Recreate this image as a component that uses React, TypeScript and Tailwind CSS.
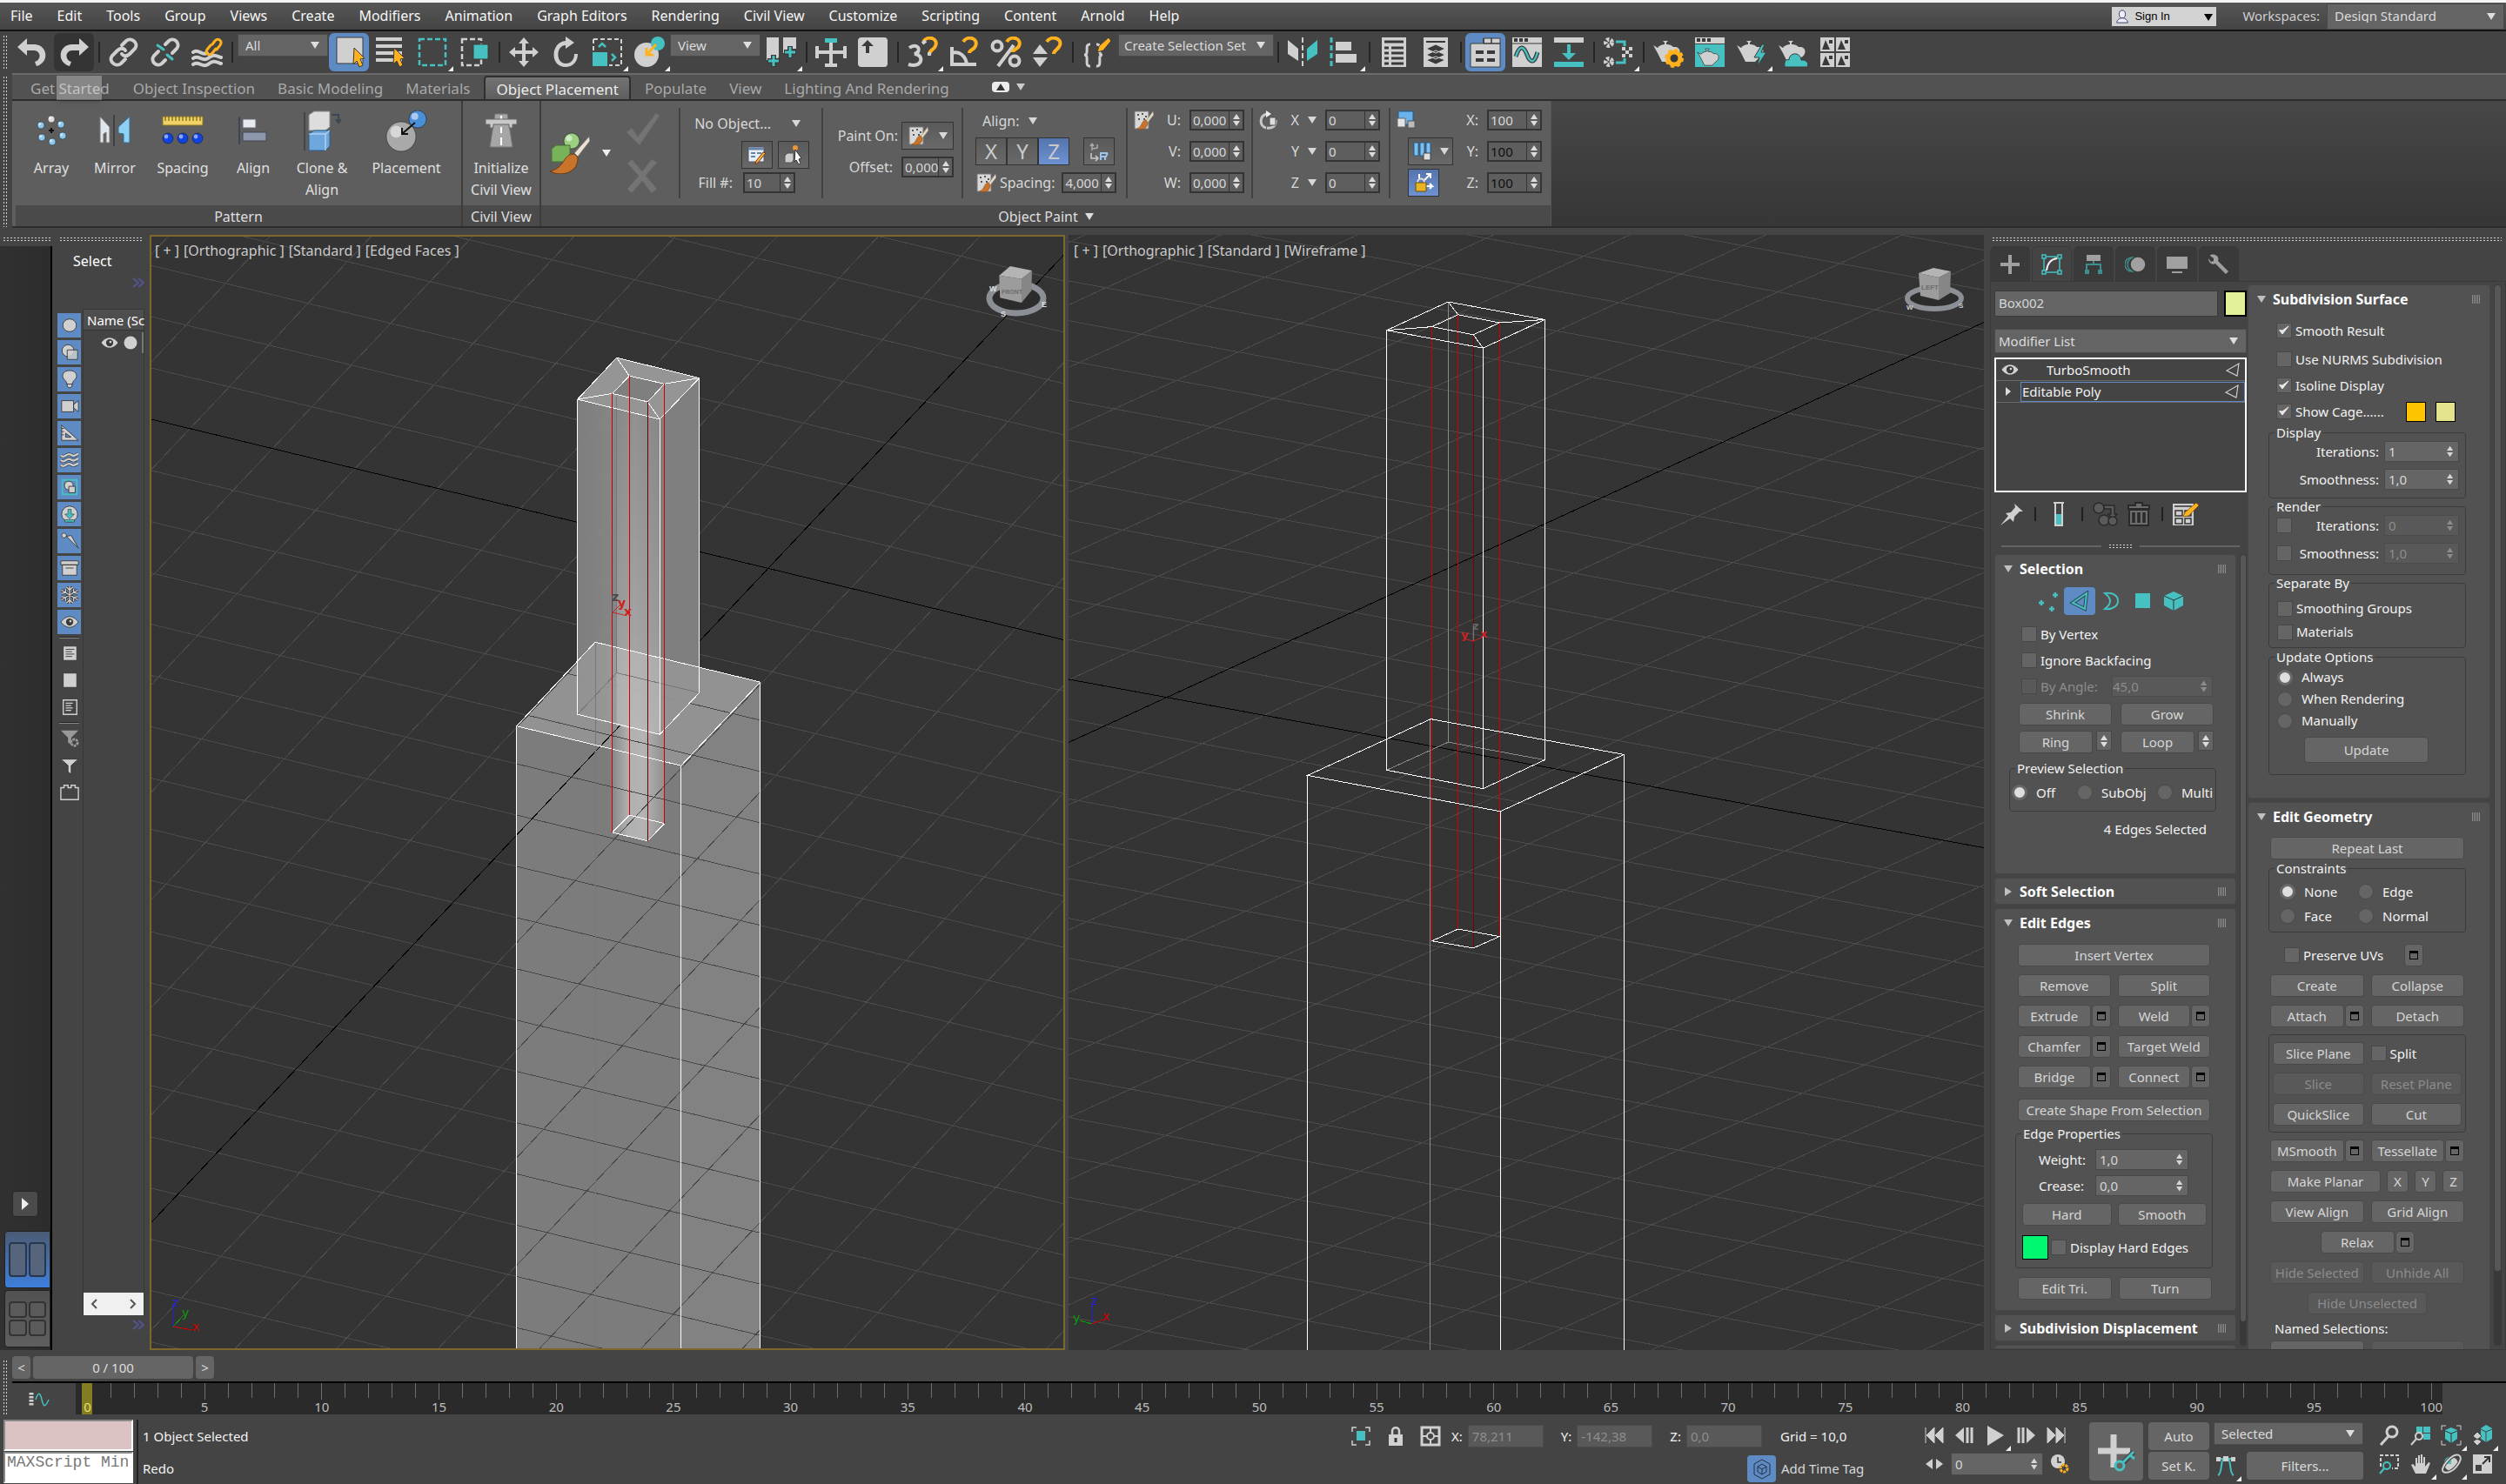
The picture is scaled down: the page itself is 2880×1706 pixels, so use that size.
import React from "react";

type Kids = { children?: React.ReactNode };

const L = "#d0d0d0";
const T = "#46c0c0";
const O = "#ffb21e";
const D = "#3a3a3a";

/* ---------- shared controls ---------- */

function Caret({ className = "" }: { className?: string }) {
  return (
    <svg viewBox="0 0 10 8" className={`h-2 w-2.5 ${className}`} aria-hidden="true">
      <path d="M0 0h10L5 8z" fill="currentColor" />
    </svg>
  );
}

function Combo({ label, value, className = "" }: { label: string; value: string; className?: string }) {
  return (
    <span className={`relative block ${className}`}>
      <select
        aria-label={label}
        className="h-full w-full appearance-none border border-[#4a4a4a] bg-[#646464] pl-2 pr-6 text-[15px] leading-none text-[#dcdcdc]"
      >
        <option>{value}</option>
      </select>
      <Caret className="pointer-events-none absolute right-2.5 top-1/2 -mt-1 text-[#dedede]" />
    </span>
  );
}

function Btn({ children, off, label, className = "" }: Kids & { off?: boolean; label?: string; className?: string }) {
  return (
    <button
      type="button"
      disabled={off}
      aria-label={label}
      className={`flex h-[26px] items-center justify-center whitespace-nowrap rounded border ${
        off ? "border-[#4c4c4c] bg-[#595959] text-[#8c8c8c]" : "border-[#494949] bg-[#656565] text-[#d6d6d6]"
      } ${className}`}
    >
      {children}
    </button>
  );
}

function Settings({ label }: { label: string }) {
  return (
    <button
      type="button"
      aria-label={`${label} settings`}
      className="flex h-[26px] w-[22px] shrink-0 items-center justify-center rounded border border-[#494949] bg-[#656565]"
    >
      <span className="block h-[10px] w-[10px] border border-t-[3px] border-black" />
    </button>
  );
}

function WithSettings({ children, name }: Kids & { name: string }) {
  return (
    <div className="flex gap-px">
      <Btn className="flex-1">{children}</Btn>
      <Settings label={name} />
    </div>
  );
}

function Arrows({ className = "" }: { className?: string }) {
  return (
    <svg viewBox="0 0 8 14" className={`h-3.5 w-2 ${className}`} aria-hidden="true">
      <path d="M0 6h8L4 0zM0 8h8l-4 6z" fill="currentColor" />
    </svg>
  );
}

function Spin({ label, value, off, className = "" }: { label: string; value: string; off?: boolean; className?: string }) {
  return (
    <span
      className={`flex h-6 items-center border pr-1.5 ${
        off ? "border-[#4c4c4c] bg-[#595959] text-[#8c8c8c]" : "border-[#484848] bg-[#656565] text-[#d6d6d6]"
      } ${className}`}
    >
      <input aria-label={label} defaultValue={value} disabled={off} className="w-full min-w-0 bg-transparent pl-1 leading-none" />
      <Arrows />
    </span>
  );
}

function Check({ label, on, off, className = "" }: { label: string; on?: boolean; off?: boolean; className?: string }) {
  return (
    <label className={`flex items-center gap-1 whitespace-nowrap ${off ? "text-[#8c8c8c]" : "text-[#f2f2f2]"} ${className}`}>
      <span className="relative block h-[18px] w-[18px] shrink-0">
        <input
          type="checkbox"
          defaultChecked={on}
          disabled={off}
          className="peer block h-full w-full appearance-none border border-[#484848] bg-[#656565] disabled:bg-[#595959]"
        />
        <svg viewBox="0 0 18 18" className="pointer-events-none absolute inset-0 hidden h-full w-full peer-checked:block">
          <path d="M3.500 8.500L7 13l7-9-7 5z" fill="#e8e8e8" stroke="#e8e8e8" />
        </svg>
      </span>
      {label}
    </label>
  );
}

function Radio({ label, name, on, className = "" }: { label: string; name: string; on?: boolean; className?: string }) {
  return (
    <label className={`flex items-center gap-2.5 whitespace-nowrap text-[#f2f2f2] ${className}`}>
      <input
        type="radio"
        name={name}
        defaultChecked={on}
        className="block h-[18px] w-[18px] shrink-0 appearance-none rounded-full border border-[#4b4b4b] bg-[#656565] checked:border-[3px] checked:border-[#686868] checked:bg-[#dedede]"
      />
      {label}
    </label>
  );
}

function Group({ title, children, className = "" }: Kids & { title: string; className?: string }) {
  return (
    <fieldset className={`rounded-sm border border-[#3b3b3b] ${className}`}>
      <legend className="ml-1.5 h-5 px-0.5 leading-5 text-[#f2f2f2]">{title}</legend>
      {children}
    </fieldset>
  );
}

function Rollout({ title, open, children, className = "" }: Kids & { title: string; open?: boolean; className?: string }) {
  return (
    <section className={`shrink-0 rounded border border-[#474747] bg-[#525252] ${className}`}>
      <header className={`flex items-center px-2.5 ${open ? "h-[31px]" : "h-[29px]"}`}>
        <svg viewBox="0 0 10 10" className="mr-2 h-2.5 w-2.5" aria-hidden="true">
          <path d={open ? "M0 1h10L5 9z" : "M1 0v10l8-5z"} fill="#c0c0c0" />
        </svg>
        <h2 className="flex-1 text-[16px] font-bold leading-5 text-white">{title}</h2>
        <span className="h-2.5 w-2.5 bg-[repeating-linear-gradient(90deg,#8c8c8c_0_1px,#525252_1px_2px)]" />
      </header>
      {children}
    </section>
  );
}

function Grip({ vertical, className = "" }: { vertical?: boolean; className?: string }) {
  return (
    <span
      className={`block shrink-0 ${
        vertical
          ? "bg-[radial-gradient(#d2d2d2_1px,transparent_1px)] bg-[size:3px_4px]"
          : "bg-[radial-gradient(#d2d2d2_1px,transparent_1px)] bg-[size:4px_3px]"
      } ${className}`}
    />
  );
}

/* ---------- toolbar drawings (36 x 36 box) ---------- */

const teapot = "M1 10l5 3c2-3 6-4 8-4V7l-2-2h6l-2 2v2c4 0 6 1 8 3l3 0c6 1 6 9 0 12l-5 5H11L6 19 1 10z";

const tools: Record<string, React.ReactNode> = {
  undo: <path d="M12 2L1 12l11 10v-6h8c8 0 9 11 1 13l2 5c15-4 13-24-2-25h-9z" fill={L} />,
  redo: <path d="M24 2l11 10-11 10v-6h-8c-8 0-9 11-1 13l-2 5C-2 30 0 10 15 9h9z" fill={L} />,
  link: (
    <g fill="none" stroke={L} strokeWidth="4" strokeLinecap="round">
      <path d="M16 10l5-5c6-5 15 3 10 9l-6 6c-3 3-7 3-9 0" />
      <path d="M20 26l-5 5C9 36 0 28 5 22l6-6c3-3 7-3 9 0" />
    </g>
  ),
  unlink: (
    <g fill="none" strokeWidth="4" strokeLinecap="round">
      <path d="M18 9l4-4c6-5 14 3 9 9l-5 5M18 27l-4 4C8 36 0 28 5 22l5-5" stroke={L} />
      <path d="M9 10l7 5M20 21l6 5" stroke={T} strokeWidth="3" />
    </g>
  ),
  bind: (
    <g fill="none" strokeLinecap="round">
      <path d="M2 18c6-5 10 5 16 1M2 25c6-5 11 5 17 0s9-3 15-1M2 32c6-5 11 5 17 0s9-3 15-1" stroke={L} strokeWidth="4" />
      <path d="M24 9l3-4c4-4 9 0 6 5l-4 5M28 14l-4 5c-4 4-9 0-6-4l4-5" stroke={O} strokeWidth="3" />
    </g>
  ),
  select: (
    <g>
      <path d="M4 1h30v30H4z" fill={L} stroke={D} />
      <path d="M24 13l12 12-5 1 3 7-4 2-3-7-4 4z" fill={O} stroke={D} />
    </g>
  ),
  byName: (
    <g>
      <path d="M1 1h30v4H1zM1 9h30v4H1zM1 17h30v4H1zM1 25h30v4H1z" fill={L} />
      <path d="M22 13l12 12-5 1 3 7-4 2-3-7-4 4z" fill={O} stroke={D} />
    </g>
  ),
  region: <path d="M3 3h30v30H3z" fill="none" stroke={T} strokeWidth="2.500" strokeDasharray="6 3" />,
  crossing: (
    <g>
      <path d="M4 3h22v30H4z" fill="none" stroke={L} strokeWidth="2.500" strokeDasharray="6 3" />
      <path d="M17 9h17v17H17z" fill={T} stroke={D} />
    </g>
  ),
  move: <path d="M18 1l6 7h-4v8h8v-4l7 6-7 6v-4h-8v8h4l-6 7-6-7h4v-8H8v4l-7-6 7-6v4h8V8h-4z" fill={L} />,
  rotate: <path d="M18 0l10 7-10 7v-4C7 10 6 31 18 31c7 0 10-5 10-11h4c0 9-6 15-14 15C-1 35 1 6 18 5z" fill={L} />,
  scale: (
    <g>
      <path d="M2 3h32v30H20M2 3v14" fill="none" stroke={L} strokeWidth="2" strokeDasharray="5 3" />
      <path d="M1 18h17v16H1z" fill={T} />
      <path d="M8 12l4-4 4 4M23 20l4 4-4 4" fill="none" stroke={T} strokeWidth="2.500" />
    </g>
  ),
  place: (
    <g>
      <ellipse cx="15" cy="21" rx="14" ry="14" fill={L} />
      <circle cx="28" cy="8" r="8" fill={T} />
      <path d="M26 9L17 19M15 13v8h8" fill="none" stroke={O} strokeWidth="3" />
    </g>
  ),
  pivot: (
    <g>
      <path d="M1 1h14v22l-3 8-5-3-6-1zM20 1h15v13H25v5h-5z" fill={L} />
      <path d="M9 21v14M2 28h14M28 11v14M21 18h14" stroke={D} strokeWidth="6" />
      <path d="M9 22v12M3 28h12M28 12v12M22 18h12" stroke={T} strokeWidth="3" />
    </g>
  ),
  manipulate: (
    <g>
      <path d="M18 4v28M2 18h32" stroke={L} strokeWidth="4" />
      <path d="M2 11v14M34 11v14M11 33h14" stroke={L} strokeWidth="4" />
      <path d="M11 2h14v5H11z" fill={T} />
    </g>
  ),
  keyboard: (
    <g>
      <rect x="1" y="1" width="34" height="34" rx="4" fill={L} />
      <path d="M12 4l7 7h-5v8h-4v-8H5z" fill={D} />
    </g>
  ),
  snap: (
    <g fill="none">
      <path d="M3 13c9-7 16 4 6 7 12 1 9 17-7 12" stroke={L} strokeWidth="4" />
      <path d="M19 6c5-8 18-4 14 5-2 5-7 4-7 10" stroke={O} strokeWidth="4" />
      <path d="M26 18v4M18 8l4-3" stroke={L} strokeWidth="4" />
    </g>
  ),
  angle: (
    <g fill="none">
      <path d="M4 12v20h28M4 19c9-3 16 4 17 13" stroke={L} strokeWidth="4" />
      <path d="M17 6c5-8 18-4 14 5-2 5-7 4-7 8" stroke={O} strokeWidth="4" />
    </g>
  ),
  percent: (
    <g fill="none">
      <circle cx="8" cy="11" r="5.500" stroke={L} strokeWidth="4" />
      <circle cx="28" cy="28" r="5.500" stroke={L} strokeWidth="4" />
      <path d="M27 10L9 34" stroke={L} strokeWidth="4" />
      <path d="M19 6c5-8 18-4 14 5-2 4-7 4-7 7" stroke={O} strokeWidth="4" />
    </g>
  ),
  spinner: (
    <g fill="none">
      <path d="M1 20l8-11 9 11zM1 24h17L9 35z" fill={L} />
      <path d="M17 6c5-8 18-4 15 4-2 6-7 5-7 10" stroke={O} strokeWidth="4" />
    </g>
  ),
  braces: (
    <g fill="none">
      <path d="M10 9c-8-1 0 12-7 12 7 0-1 14 7 13M17 9c8-1 0 12 7 12-7 0 1 14-7 13" stroke={L} strokeWidth="3" />
      <path d="M18 18l2-7L31 1l3 4-9 11z" fill={O} stroke={D} />
    </g>
  ),
  mirror: (
    <g>
      <path d="M1 4l12 10v14L1 20z" fill={L} />
      <path d="M35 4L23 14v14l12-8z" fill={T} />
      <path d="M18 1v34" stroke={L} strokeWidth="2" strokeDasharray="6 3" />
    </g>
  ),
  align: (
    <g>
      <path d="M3 1v34" stroke={T} strokeWidth="3" strokeDasharray="6 3" />
      <path d="M8 6h18v10H8zM8 20h24v10H8z" fill={L} />
    </g>
  ),
  layer: (
    <g>
      <path d="M4 1h28v34H4z" fill={L} />
      <path d="M7 6h22M7 13h5M15 13h14M7 19h5M15 19h14M7 25h5M15 25h14M7 31h5M15 31h14" stroke={D} strokeWidth="3" />
    </g>
  ),
  layers: (
    <g>
      <path d="M4 1h28v34H4z" fill={L} />
      <path d="M7 6h22" stroke={D} strokeWidth="2" />
      <path d="M18 9l11 5-11 5-11-5zM18 16l11 5-11 5-11-5zM18 23l11 4-11 5-11-5z" fill={D} stroke={L} />
    </g>
  ),
  ribbon: (
    <g>
      <path d="M1 8h15V2h19v33H1z" fill={L} stroke={D} />
      <path d="M16 2v6M25 2v6M16 8h19" stroke={D} strokeWidth="1.500" />
      <path d="M7 18h9M20 18h9M7 27h9M20 27h9" stroke={D} strokeWidth="4" />
    </g>
  ),
  curve: (
    <g>
      <path d="M1 1h34v34H1z" fill={L} />
      <path d="M3 4h4M9 4h4M15 4h4" stroke={D} strokeWidth="4" />
      <path d="M1 8h34" stroke={D} />
      <path d="M5 23c5-16 10-10 13-2s8 12 12-3" fill="none" stroke={D} strokeWidth="5" />
      <path d="M5 23c5-16 10-10 13-2s8 12 12-3" fill="none" stroke={T} strokeWidth="2.500" />
    </g>
  ),
  schematic: (
    <g>
      <path d="M1 1h34v6H1z" fill={L} />
      <path d="M16 9h4v10h6l-8 8-8-8h6zM1 29h34v6H1z" fill={T} />
    </g>
  ),
  slate: (
    <g fill="none">
      <circle cx="7" cy="7" r="3.500" stroke={L} strokeWidth="5" strokeDasharray="3 1.500" />
      <circle cx="7" cy="29" r="3.500" stroke={L} strokeWidth="5" strokeDasharray="3 1.500" />
      <path d="M15 6h10v5M15 30h10v-5" stroke={T} strokeWidth="3" />
      <path d="M22 12h4v4h-4zM30 12h4v4h-4zM26 16h4v4h-4zM22 20h4v4h-4zM30 20h4v4h-4z" fill={L} />
    </g>
  ),
  renderSetup: (
    <g>
      <path d={teapot} fill={L} />
      <circle cx="25" cy="25" r="7" fill={D} stroke={O} strokeWidth="5" />
      <circle cx="25" cy="25" r="9.500" fill="none" stroke={O} strokeWidth="3" strokeDasharray="4 3.500" />
    </g>
  ),
  frame: (
    <g>
      <path d="M1 1h34v7H1z" fill={L} />
      <path d="M3 4h4M9 4h4M15 4h4" stroke={D} strokeWidth="4" />
      <path d="M1 9h34v26H1z" fill={T} />
      <path d={teapot} fill={L} stroke={D} transform="translate(3 10) scale(.8)" />
    </g>
  ),
  render: (
    <g>
      <path d={teapot} fill={L} />
      <path d="M30 9l-9 15h6l-3 11 11-17h-6l4-9z" fill={T} stroke={D} />
    </g>
  ),
  cloud: (
    <g>
      <path d={teapot} fill={L} />
      <path d="M8 35c-1-9 3-9 5-8 0-9 13-10 14 0 9-1 9 8 6 8z" fill={T} stroke={D} />
    </g>
  ),
  gallery: (
    <g>
      <path d="M1 1h16v16H1zM19 1h16v16H19zM1 19h16v16H1zM19 19h16v16H19z" fill={L} />
      <path d="M3 15l4-11 5 11zM21 15l4-11 5 11zM3 33l4-11 5 11zM21 33l4-11 5 11z" fill={D} />
      <path d="M11 6h4M29 6h4M11 24h4M29 24h4" stroke={D} strokeWidth="4" />
    </g>
  ),
};

function Tool({ name, label, on, hover, fly }: { name: string; label: string; on?: boolean; hover?: boolean; fly?: boolean }) {
  return (
    <button type="button" aria-label={label} className="relative flex h-12 w-12 shrink-0 items-center justify-center">
      <span
        className={`flex h-11 w-[46px] items-center justify-center rounded-md ${
          on ? "border-2 border-[#5f8bc4] bg-[#5f8bc4]" : hover ? "bg-[#343434]" : ""
        }`}
      >
        <svg viewBox="0 0 36 36" className="h-9 w-9">
          {tools[name]}
        </svg>
      </span>
      {fly && (
        <svg viewBox="0 0 6 6" className="absolute bottom-0.5 right-0 h-1.5 w-1.5">
          <path d="M6 0v6H0z" fill="#eee" />
        </svg>
      )}
    </button>
  );
}

function Sep() {
  return (
    <span className="flex w-[9px] shrink-0 justify-center">
      <span className="h-6 w-0.5 bg-[#242424]" />
    </span>
  );
}

const menus = [
  "File", "Edit", "Tools", "Group", "Views", "Create", "Modifiers", "Animation", "Graph Editors",
  "Rendering", "Civil View", "Customize", "Scripting", "Content", "Arnold", "Help",
];

function MenuBar() {
  return (
    <header className="flex h-9 shrink-0 items-center border-b-2 border-t-[3px] border-b-[#141414] border-t-[#f4f4f4] bg-gradient-to-b from-[#565656] to-[#444]">
      <nav className="flex gap-7 pb-px pl-3 text-[16px] text-[#f6f6f6]">
        {menus.map((m) => (
          <a key={m} href="#" className="whitespace-nowrap">
            {m}
          </a>
        ))}
      </nav>
      <div className="ml-auto flex items-center">
        <span className="relative mr-[30px] flex h-[22px] w-[120px] items-center bg-[#d2d2d2]">
          <svg viewBox="0 0 16 18" className="ml-1 h-4 w-4">
            <ellipse cx="8" cy="6" rx="4" ry="5" fill="#eef" stroke="#26345a" />
            <path d="M1 17c0-4 4-6 7-6s7 2 7 6z" fill="#eef" stroke="#26345a" />
          </svg>
          <select aria-label="Account" className="h-full flex-1 appearance-none bg-transparent pl-1.5 font-['Liberation_Sans'] text-[13px] text-black">
            <option>Sign In</option>
          </select>
          <Caret className="absolute right-1 top-2 text-black" />
        </span>
        <span className="mr-2 text-[15px] text-[#cfcfcf]">Workspaces:</span>
        <Combo label="Workspaces" value="Design Standard" className="mr-0.5 h-[30px] w-[204px]" />
      </div>
    </header>
  );
}

function Toolbar() {
  return (
    <div className="relative flex h-12 shrink-0 items-center bg-[#444]">
      <Grip vertical className="ml-[3px] mr-1 h-10 w-1.5" />
      <Tool name="undo" label="Undo" />
      <Tool name="redo" label="Redo" hover />
      <Sep />
      <Tool name="link" label="Select and Link" />
      <Tool name="unlink" label="Unlink Selection" />
      <Tool name="bind" label="Bind to Space Warp" />
      <Sep />
      <Combo label="Selection filter" value="All" className="mb-4 ml-0.5 h-[26px] w-[104px]" />
      <Tool name="select" label="Select Object" on />
      <Tool name="byName" label="Select by Name" />
      <Tool name="region" label="Rectangular Selection Region" fly />
      <Tool name="crossing" label="Window / Crossing" />
      <Sep />
      <Tool name="move" label="Select and Move" />
      <Tool name="rotate" label="Select and Rotate" />
      <Tool name="scale" label="Select and Scale" fly />
      <Tool name="place" label="Select and Place" fly />
      <Combo label="Reference coordinate system" value="View" className="mb-4 h-[26px] w-[104px]" />
      <Tool name="pivot" label="Use Pivot Point Center" fly />
      <Sep />
      <Tool name="manipulate" label="Select and Manipulate" />
      <Tool name="keyboard" label="Keyboard Shortcut Override" />
      <Sep />
      <Tool name="snap" label="Snaps Toggle" fly />
      <Tool name="angle" label="Angle Snap" />
      <Tool name="percent" label="Percent Snap" />
      <Tool name="spinner" label="Spinner Snap" />
      <Sep />
      <Tool name="braces" label="Edit Named Selection Sets" />
      <Combo label="Named selection sets" value="Create Selection Set" className="mb-4 h-[26px] w-[179px] [&>select]:pl-1.5" />
      <Sep />
      <Tool name="mirror" label="Mirror" />
      <Tool name="align" label="Align" fly />
      <Sep />
      <Tool name="layer" label="Scene Explorer" />
      <Tool name="layers" label="Layer Explorer" />
      <Sep />
      <Tool name="ribbon" label="Toggle Ribbon" on />
      <Tool name="curve" label="Curve Editor" />
      <Tool name="schematic" label="Schematic View" />
      <Sep />
      <Tool name="slate" label="Material Editor" fly />
      <Sep />
      <Tool name="renderSetup" label="Render Setup" />
      <Tool name="frame" label="Rendered Frame Window" />
      <Tool name="render" label="Render Production" fly />
      <Tool name="cloud" label="Render in the Cloud" />
      <Tool name="gallery" label="Open Gallery" />
      <span className="absolute left-[65px] top-[51px] z-10 h-7 w-[52px] bg-white/30 shadow-md" />
    </div>
  );
}

/* ---------- ribbon ---------- */

const ribbonTabs = [
  "Get Started", "Object Inspection", "Basic Modeling", "Materials", "Object Placement", "Populate", "View", "Lighting And Rendering",
];

function BigIcon({ children, label, width }: Kids & { label: string; width: string }) {
  return (
    <button type="button" className={`flex flex-col items-center ${width}`}>
      <svg viewBox="0 0 48 48" className="h-12 w-12">
        {children}
      </svg>
      <span className="mt-1.5 text-[16px] leading-[25px] text-[#e0e0e0]">{label}</span>
    </button>
  );
}

function PanelTitle({ children }: Kids) {
  return (
    <div className="flex h-6 items-center justify-center gap-2 bg-[#4a4a4a] pt-0.5 text-[16px] text-[#dedede]">{children}</div>
  );
}

function Num({ label, value, className = "w-[63px]", dark }: { label: string; value: string; className?: string; dark?: boolean }) {
  return (
    <span className={`flex h-6 border-2 border-[#343434] bg-[#5e5e5e] ${className}`}>
      <input
        aria-label={label}
        defaultValue={value}
        className={`w-full min-w-0 bg-transparent pl-0.5 text-[15px] leading-none ${dark ? "text-[#101010]" : "text-[#d8d8d8]"}`}
      />
      <span className="flex w-4 shrink-0 flex-col items-center justify-around border-l border-[#343434] text-[#ddd]">
        <Arrows className="h-4" />
      </span>
    </span>
  );
}

function Square({ label, children, on, className = "w-9" }: Kids & { label: string; on?: boolean; className?: string }) {
  return (
    <button
      type="button"
      aria-label={label}
      className={`flex h-8 items-center justify-center gap-1 border border-[#333] ${
        on ? "bg-gradient-to-b from-[#5574ad] to-[#6d92d3]" : "bg-gradient-to-b from-[#5a5a5a] to-[#696969]"
      } ${className}`}
    >
      {children}
    </button>
  );
}

function VLine() {
  return <span className="my-2 w-0.5 shrink-0 bg-[#424242]" />;
}

function BrushPaper() {
  return (
    <svg viewBox="0 0 24 24" className="h-6 w-6">
      <path d="M2 2h16v20H2z" fill="#d8d8d8" stroke="#777" />
      <path d="M5 6h2M10 5h2M14 8h2M6 11h2M12 11h2" stroke="#555" strokeWidth="2" />
      <path d="M23 2l-8 11 2 2 7-9z" fill="#e5d9c2" stroke="#777" strokeWidth=".5" />
      <path d="M15 12c-5 0-4 7-10 10 7 2 12-1 12-7z" fill="#c9722a" stroke="#7c4413" strokeWidth=".5" />
    </svg>
  );
}

function Ball({ x, y, r, fill }: { x: number; y: number; r: number; fill: string }) {
  return (
    <g>
      <circle cx={x} cy={y} r={r} fill={fill} stroke="#0006" />
      <circle cx={x - r / 3} cy={y - r / 3} r={r / 2.5} fill="#fff8" />
    </g>
  );
}

function Ribbon() {
  return (
    <div className="flex shrink-0 bg-[#444]">
      <Grip vertical className="ml-[3px] mr-[5px] mt-[3px] h-[174px] w-1.5" />
      <div className="min-w-0 flex-1">
        <div className="flex h-8 items-end border-b-2 border-t-2 border-b-[#2d2d2d] border-t-[#6a6a6a] bg-[#525252] text-[17px] text-[#a9a9a9]">
          {ribbonTabs.map((t) => (
            <button
              key={t}
              type="button"
              className={`h-[27px] whitespace-nowrap ${
                t === "Object Placement"
                  ? "mx-[3px] rounded-t border-2 border-b-0 border-[#2f2f2f] bg-gradient-to-b from-[#747474] to-[#5e5e5e] px-3 leading-[27px] text-[#ececec]"
                  : t === "Get Started"
                    ? "pl-[21px] pr-3.5 leading-[29px]"
                    : "px-[13px] leading-[29px]"
              }`}
            >
              {t}
            </button>
          ))}
          <span className="mb-2 ml-9 flex items-center gap-2">
            <button type="button" aria-label="Minimise ribbon" className="flex h-3 w-5 items-center justify-center rounded-sm bg-[#ececec]">
              <Caret className="h-1.5 w-2 rotate-180 text-[#333]" />
            </button>
            <Caret className="h-1.5 w-2 text-[#ccc]" />
          </span>
        </div>
        <div className="flex h-[146px] border-b-2 border-[#2c2c2c] bg-gradient-to-b from-[#474747] to-[#363636]">
          <section className="flex w-[518px] shrink-0 flex-col justify-between border-r-2 border-[#3c3c3c] bg-[#5e5e5e] pl-1">
            <div className="flex items-start pl-[5px] pt-[11px]">
              <BigIcon label="Array" width="w-[72px]">
                <Ball x={24} y={10} r={4} fill="#ddd" />
                <Ball x={35} y={16} r={4} fill="#8fc9ef" />
                <Ball x={37} y={29} r={4} fill="#8fc9ef" />
                <Ball x={25} y={36} r={4} fill="#8fc9ef" />
                <Ball x={13} y={31} r={4} fill="#8fc9ef" />
                <Ball x={12} y={17} r={4} fill="#8fc9ef" />
                <path d="M24 20v6M21 23h6" stroke="#111" strokeWidth="2" />
              </BigIcon>
              <BigIcon label="Mirror" width="w-[74px]">
                <path d="M7 7l11 12v18h-4V25l-3 2v10H7z" fill="#dfe6ec" stroke="#777" />
                <path d="M41 7L28 19v7l6 1v10h7z" fill="#8fd0f5" stroke="#3a6b8f" />
                <path d="M23 5v36" stroke="#222" />
              </BigIcon>
              <BigIcon label="Spacing" width="w-[82px]">
                <path d="M1 7h46v10H1z" fill="#f0d264" stroke="#8a7427" />
                <path d="M4 7v5M8 7v5M12 7v5M16 7v5M20 7v5M24 7v5M28 7v5M32 7v5M36 7v5M40 7v5M44 7v5" stroke="#5b4a10" />
                <Ball x={7} y={32} r={6} fill="#1043e0" />
                <Ball x={24} y={32} r={6} fill="#1043e0" />
                <Ball x={41} y={32} r={6} fill="#1043e0" />
              </BigIcon>
              <BigIcon label="Align" width="w-[80px]">
                <path d="M8 7v32" stroke="#3b4657" strokeWidth="2" />
                <path d="M12 10h15v10H12z" fill="#e6e9ee" stroke="#667" />
                <path d="M12 25h27v10H12z" fill="#8c97ab" stroke="#445" />
              </BigIcon>
              <BigIcon label="Clone & Align" width="w-[78px]">
                <path d="M4 2v44" stroke="#444" strokeWidth="2" />
                <path d="M9 5l6-4h18v18l-5 4H9z" fill="#ddd" stroke="#888" />
                <path d="M9 27l6-4h18v18l-5 5H9z" fill="#6ea7dc" stroke="#2d5c8c" />
                <path d="M9 27h19v19M28 27l5-4" fill="none" stroke="#cfe4f7" />
                <path d="M35 5h8v8M40 10l3 4 3-4" fill="none" stroke="#3b4657" strokeWidth="2" />
              </BigIcon>
              <BigIcon label="Placement" width="w-[116px]">
                <Ball x={18} y={30} r={17} fill="#a9a9a9" />
                <Ball x={37} y={10} r={10} fill="#4a90d9" />
                <path d="M34 14L20 26M19 20v7h7" fill="none" stroke="#111" strokeWidth="2" />
              </BigIcon>
            </div>
            <PanelTitle>Pattern</PanelTitle>
          </section>
          <section className="flex w-[90px] shrink-0 flex-col justify-between border-r-2 border-[#3c3c3c] bg-[#5e5e5e]">
            <div className="flex justify-center pt-[11px]">
              <BigIcon label="Initialize Civil View" width="w-20">
                <path d="M17 4h14l6 38H11z" fill="#a6a6a6" stroke="#777" />
                <path d="M24 6v4M24 19v7M24 31v9" stroke="#fff" strokeWidth="2" />
                <path d="M6 10h36v6h-5v4h-4v-4H15v4h-4v-4H6z" fill="#c8c8c8" stroke="#666" />
              </BigIcon>
            </div>
            <PanelTitle>Civil View</PanelTitle>
          </section>
          <section className="flex shrink-0 flex-col justify-between border-r border-[#555] bg-[#5e5e5e] text-[16px] text-[#d8d8d8]">
            <div className="flex h-[120px]">
              <div className="flex items-center gap-3.5 pl-2">
                <svg viewBox="0 0 48 48" className="h-12 w-12">
                  <Ball x={27} y={10} r={9} fill="#9ad07f" />
                  <path d="M4 19l5-4h16v14l-5 5H4z" fill="#78b35c" stroke="#476f34" />
                  <path d="M47 5L30 24l4 4 14-18z" fill="#eee3d3" stroke="#777" />
                  <path d="M30 25c-14 0-9 15-28 20 14 7 33 1 32-16z" fill="#c8742a" stroke="#6b3a10" />
                </svg>
                <Caret className="h-1.5 w-2 text-[#eee]" />
                <svg viewBox="0 0 44 96" className="mr-5 h-24 w-11">
                  <path d="M4 24l6-5 7 10L38 2l4 3-23 34z" fill="#747474" stroke="#666" />
                  <path d="M5 60l5-5 12 14 11-14 6 4-13 15 13 15-6 5-11-14-12 14-5-5 13-15z" fill="#747474" stroke="#666" />
                </svg>
              </div>
              <VLine />
              <div className="flex w-[162px] flex-col items-end gap-1 pr-3.5 pt-3">
                <button type="button" className="mr-2.5 flex items-center gap-6 whitespace-nowrap leading-7">
                  No Object... <Caret className="h-1.5 w-2" />
                </button>
                <div className="mt-0.5 flex gap-1.5">
                  <Square label="Edit object list">
                    <svg viewBox="0 0 24 24" className="h-6 w-6">
                      <path d="M2 3h18v17H2z" fill="#e8eef5" stroke="#556" />
                      <path d="M2 5h18" stroke="#6684a8" strokeWidth="3" />
                      <path d="M5 10h5M5 14h5M12 10h5" stroke="#6684a8" strokeWidth="2" />
                      <path d="M22 10l-9 11-3 2 1-4 8-10z" fill="#f2b233" stroke="#7a3420" />
                    </svg>
                  </Square>
                  <Square label="Pick object">
                    <svg viewBox="0 0 24 24" className="h-6 w-6">
                      <path d="M2 13l3-3h7v8l-2 3H2z" fill="#ccc" stroke="#555" />
                      <circle cx="14" cy="4" r="3" fill="#f2943a" />
                      <path d="M14 6l7 10-3 1 2 5-2 1-3-5-2 2z" fill="#fff" stroke="#333" />
                    </svg>
                  </Square>
                </div>
                <div className="mr-4 flex items-center gap-3">
                  Fill #: <Num label="Fill count" value="10" className="w-[60px]" />
                </div>
              </div>
              <VLine />
              <div className="flex w-[159px] flex-col items-end gap-2 pr-[9px] pt-6">
                <div className="flex items-center gap-1 whitespace-nowrap">
                  Paint On:
                  <Square label="Paint on" className="w-[60px]">
                    <BrushPaper />
                    <Caret className="ml-2 h-1.5 w-2" />
                  </Square>
                </div>
                <div className="flex items-center gap-2.5">
                  Offset: <Num label="Offset" value="0,000" className="w-[60px]" />
                </div>
              </div>
              <VLine />
              <div className="flex w-[187px] flex-col gap-2 pl-3.5 pt-2.5">
                <button type="button" className="flex items-center gap-2.5 pl-2 leading-[26px]">
                  Align: <Caret className="h-1.5 w-2" />
                </button>
                <div className="-mt-0.5 flex">
                  {["X", "Y", "Z"].map((a) => (
                    <Square key={a} label={`Align ${a}`} on={a === "Z"}>
                      <span className="text-[24px] text-[#c9c9c9]">{a}</span>
                    </Square>
                  ))}
                  <span className="w-4" />
                  <Square label="Flip axis">
                    <svg viewBox="0 0 24 24" className="h-6 w-6" fill="none">
                      <path d="M4 11V3M4 3l-2 3M4 3l2 3M4 9l6-1V4" stroke="#aaa" strokeWidth="1.500" />
                      <path d="M3 14v6h7M8 17l3 3-3 3" stroke="#ccc" strokeWidth="1.500" />
                      <path d="M14 22v-8h8M14 18h6l2-4M19 22v-4" stroke="#9cc5ee" strokeWidth="2" />
                    </svg>
                  </Square>
                </div>
                <div className="flex items-center gap-1">
                  <BrushPaper />
                  Spacing:
                  <Num label="Spacing" value="4,000" className="ml-1 w-[63px]" />
                </div>
              </div>
              <VLine />
              <div className="flex w-[142px] gap-1 pl-1.5 pr-2 pt-2.5">
                <BrushPaper />
                <div className="flex flex-1 flex-col gap-3">
                  {["U", "V", "W"].map((a) => (
                    <div key={a} className="flex items-center justify-end gap-2.5 leading-6">
                      {a}: <Num label={a} value="0,000" />
                    </div>
                  ))}
                </div>
              </div>
              <VLine />
              <div className="flex w-[156px] gap-3 pl-1.5 pr-2.5 pt-2.5">
                <svg viewBox="0 0 24 24" className="h-6 w-6" fill="none">
                  <path d="M10 5C1 7 1 19 9 21M10 21c7 1 11-3 10-9" stroke="#c8c8c8" strokeWidth="3" />
                  <path d="M9 1l6 4-6 4z" fill="#eee" />
                  <path d="M13 9h7v9h-7z" fill="#ddd" stroke="#555" />
                </svg>
                <div className="flex flex-1 flex-col gap-3">
                  {["X", "Y", "Z"].map((a) => (
                    <div key={a} className="flex items-center justify-end gap-2.5 leading-6">
                      {a} <Caret className="h-1.5 w-2" /> <Num label={`Rotate ${a}`} value="0" />
                    </div>
                  ))}
                </div>
              </div>
              <VLine />
              <div className="flex w-[184px] justify-between pl-1.5 pr-2.5 pt-2.5">
                <div className="flex flex-col items-start gap-1">
                  <svg viewBox="0 0 24 24" className="mb-1 h-6 w-6">
                    <path d="M3 2h17v15H3z" fill="#6bb2ea" stroke="#225c8c" />
                    <path d="M2 10h9v10H2z" fill="#e4e4e4" stroke="#666" />
                    <path d="M14 13h8v8h-8z" fill="#bbb" stroke="#555" />
                  </svg>
                  <Square label="Scale mode" className="ml-3.5 w-[52px]">
                    <svg viewBox="0 0 24 24" className="h-6 w-6">
                      <path d="M2 2h5v15H2zM9 2h5v15H9zM16 2h5v15h-5z" fill="#7cc0f2" stroke="#225c8c" />
                      <path d="M13 14h8v8h-8z" fill="#ddd" stroke="#444" />
                    </svg>
                    <Caret className="ml-1 h-1.5 w-2" />
                  </Square>
                  <span className="ml-3.5 flex">
                    <Square label="Lock scale" on>
                      <svg viewBox="0 0 24 24" className="h-6 w-6" fill="none">
                        <path d="M13 9l7-7M15 2h5v5M15 16h7l-3-3M22 16l-3 3M7 2v5" stroke="#fff" strokeWidth="2" />
                        <path d="M5 12c0-6 8-6 8 0" stroke="#ddd" strokeWidth="2" />
                        <path d="M3 12h12v10H3z" fill="#e8b423" stroke="#6b4c05" />
                      </svg>
                    </Square>
                  </span>
                </div>
                <div className="flex flex-col gap-3">
                  {["X", "Y", "Z"].map((a) => (
                    <div key={a} className="flex items-center justify-end gap-2.5 leading-6">
                      {a}: <Num label={`Scale ${a}`} value="100" dark={a !== "X"} />
                    </div>
                  ))}
                </div>
              </div>
            </div>
            <PanelTitle>
              Object Paint <Caret />
            </PanelTitle>
          </section>
        </div>
      </div>
    </div>
  );
}

/* ---------- left side ---------- */

const filters: React.ReactNode[] = [
  <ellipse key="g" cx="12" cy="12" rx="8.500" ry="8" fill={L} stroke={D} />,
  <g key="s" stroke={D} fill={L}>
    <circle cx="10" cy="10" r="7.500" />
    <path d="M9 9h13v12H9z" fillOpacity=".8" />
  </g>,
  <path key="l" d="M12 1c10 0 11 9 5 13l-2 4v3l-3 2-3-2v-3l-2-4C1 10 2 1 12 1zM8 18h8" fill={L} stroke={D} />,
  <path key="c" d="M2 5h15v14H2zM17 10l6-5v14l-6-5z" fill={L} stroke={D} />,
  <path key="h" d="M2 2l21 19H2zM7 12v5h7zM2 6h3M2 10h3M2 14h3" fill={L} fillRule="evenodd" stroke={D} />,
  <g key="w" fill="none">
    <path d="M1 6c5 5 7-4 12-1s5 1 10-1M1 12c5 5 7-4 12-1s5 1 10-1M1 18c5 5 7-4 12-1s5 1 10-1" stroke={D} strokeWidth="4" />
    <path d="M1 6c5 5 7-4 12-1s5 1 10-1M1 12c5 5 7-4 12-1s5 1 10-1M1 18c5 5 7-4 12-1s5 1 10-1" stroke={L} strokeWidth="2.500" />
  </g>,
  <g key="gr" stroke={D}>
    <path d="M3 3h18v18H3z" fill="none" stroke={T} strokeWidth="2" />
    <circle cx="11" cy="10" r="5.500" fill={L} />
    <path d="M11 11h8v8h-8z" fill={L} />
  </g>,
  <g key="x">
    <circle cx="12" cy="12" r="10" fill={L} stroke={D} />
    <path d="M10 6h4v6h4l-6 6-6-6h4zM6 19h12v3H6z" fill={T} stroke={D} strokeWidth=".7" />
  </g>,
  <path key="b" d="M5 2a3 3 0 1 0 .1 0M8 6l6-1 9 16z" fill={L} stroke={D} />,
  <path key="ct" d="M1 3h22v5H1zM3 8h18v13H3zM7 12h10" fill={L} stroke={D} />,
  <g key="f" fill="none">
    <path d="M12 1v22M2 6l20 12M2 18L22 6M8 2l4 4 4-4M8 22l4-4 4 4M2 10l5-1V4M22 14l-5 1v5M22 10l-5-1V4M2 14l5 1v5" stroke={D} strokeWidth="3.500" />
    <path d="M12 1v22M2 6l20 12M2 18L22 6M8 2l4 4 4-4M8 22l4-4 4 4M2 10l5-1V4M22 14l-5 1v5M22 10l-5-1V4M2 14l5 1v5" stroke={L} strokeWidth="1.500" />
  </g>,
  <g key="e">
    <path d="M1 12c7-9 15-9 22 0-7 9-15 9-22 0z" fill={L} stroke={D} />
    <circle cx="12" cy="12" r="4.500" fill={D} />
    <circle cx="13" cy="11" r="1.500" fill={L} />
  </g>,
];

const extras: React.ReactNode[] = [
  <path key="1" d="M4 3h17v18H4zM7 7h11M7 10h8M7 13h11M7 16h8" fill={L} stroke="#333" />,
  <path key="2" d="M4 3h17v18H4z" fill={L} stroke="#333" />,
  <path key="3" d="M4 3h17v18H4zM7 7h9M7 10h7M7 13h9M7 16h7" fill="none" stroke={L} strokeWidth="1.500" />,
];

function SideStrip() {
  return (
    <aside className="flex w-[60px] shrink-0 flex-col">
      <Grip className="mb-[5px] ml-[3px] mt-2.5 h-1.5 w-[55px]" />
      <div className="flex flex-1 flex-col justify-end border-r-2 border-black bg-gradient-to-r from-[#313131] to-[#2c2c2c]">
        <button type="button" aria-label="Play" className="mb-4 ml-3.5 flex h-[30px] w-[30px] items-center justify-center rounded border border-[#272727] bg-[#4b4b4b]">
          <svg viewBox="0 0 10 14" className="h-3.5 w-2.5">
            <path d="M1 0l8 7-8 7z" fill="#eee" />
          </svg>
        </button>
        <button type="button" aria-label="Two views layout" className="ml-[5px] grid h-[66px] grid-cols-2 gap-0.5 rounded-l border border-[#222] bg-gradient-to-b from-[#4a5a74] to-[#3d7fdd] px-1 py-3">
          <span className="rounded-sm border-2 border-[#27364c] bg-[#56657c]" />
          <span className="rounded-sm border-2 border-[#27364c] bg-[#56657c]" />
        </button>
        <button type="button" aria-label="Four views layout" className="mb-[3px] ml-[5px] mt-0.5 grid h-[66px] grid-cols-2 gap-0.5 rounded-l border border-[#222] bg-gradient-to-b from-[#525252] to-[#5f5f5f] px-1 py-3">
          {[0, 1, 2, 3].map((i) => (
            <span key={i} className="rounded-sm border-2 border-[#333] bg-[#5a5a5a]" />
          ))}
        </button>
      </div>
    </aside>
  );
}

function Chevrons({ className = "" }: { className?: string }) {
  return (
    <svg viewBox="0 0 14 12" className={`h-3 w-3.5 shrink-0 self-end ${className}`} aria-hidden="true">
      <path d="M1 1l6 5-6 5M7 1l6 5-6 5" fill="none" stroke="#555592" strokeWidth="2" />
    </svg>
  );
}

function SelectPanel() {
  const small = "flex h-7 items-center justify-center";
  return (
    <aside className="flex w-[110px] shrink-0 flex-col">
      <Grip className="ml-2 mt-2.5 h-1.5 w-[95px]" />
      <h2 className="ml-6 mt-3 text-[16px] leading-5 text-white">Select</h2>
      <Chevrons className="mr-1 mt-[9px]" />
      <div className="mt-6 flex min-h-0 flex-1 gap-0.5">
        <div className="ml-1.5 flex w-[27px] shrink-0 flex-col gap-[3px] pt-[5px]">
          {filters.map((f, i) => (
            <button key={i} type="button" aria-label={`Display filter ${i + 1}`} className="flex h-7 items-center justify-center bg-[#5f8bc4]">
              <svg viewBox="0 0 24 24" className="h-[22px] w-[22px]">{f}</svg>
            </button>
          ))}
          <span className="mx-0.5 border-b border-t border-b-[#888] border-t-[#222]" />
          {extras.map((f, i) => (
            <button key={i} type="button" aria-label={`Display option ${i + 1}`} className={small}>
              <svg viewBox="0 0 24 24" className="h-[22px] w-[22px]">{f}</svg>
            </button>
          ))}
          <span className="mx-0.5 border-b border-t border-b-[#888] border-t-[#222]" />
          <button type="button" aria-label="Filter settings" className={small}>
            <svg viewBox="0 0 24 24" className="h-[22px] w-[22px]">
              <path d="M1 2h22l-9 9v9l-4-3v-6z" fill="#999" />
              <circle cx="18" cy="17" r="4" fill="#444" stroke="#999" strokeWidth="3" strokeDasharray="3 1" />
            </svg>
          </button>
          <button type="button" aria-label="Filter" className={small}>
            <svg viewBox="0 0 24 24" className="h-[22px] w-[22px]">
              <path d="M1 4h22l-9 8v11l-4-3v-8z" fill={L} stroke="#333" />
            </svg>
          </button>
          <button type="button" aria-label="Blocks" className={small}>
            <svg viewBox="0 0 24 24" className="h-[22px] w-[22px]">
              <path d="M1 6h4V3h5v3h4V3h5v3h4v15H1z" fill="none" stroke={L} strokeWidth="1.500" />
            </svg>
          </button>
        </div>
        <div className="flex w-[71px] flex-col border-x border-t border-[#373737]">
          <div className="h-6 whitespace-nowrap border-b border-[#333] bg-[#4e4e4e] pl-1 text-[15px] leading-6 text-white">Name (Sc</div>
          <div className="flex h-7 items-center justify-end gap-[5px]">
            <svg viewBox="0 0 24 24" className="h-[22px] w-[22px]">{filters[11]}</svg>
            <svg viewBox="0 0 16 16" className="h-4 w-4"><circle cx="8" cy="8" r="7.500" fill={L} /></svg>
            <span className="h-6 w-0.5 bg-[#777]" />
          </div>
          <div className="flex-1" />
          <div className="flex h-[26px] items-center justify-between bg-[#f0f0f0] px-2 text-[#555]">
            <svg viewBox="0 0 8 12" className="h-3 w-2"><path d="M7 1L2 6l5 5" fill="none" stroke="currentColor" strokeWidth="2" /></svg>
            <svg viewBox="0 0 8 12" className="h-3 w-2"><path d="M1 1l5 5-5 5" fill="none" stroke="currentColor" strokeWidth="2" /></svg>
          </div>
        </div>
      </div>
      <Chevrons className="mb-[23px] mr-1 mt-[5px]" />
    </aside>
  );
}

/* ---------- viewports ---------- */

type Family = { y0: number; slope: number; step: number; from: number; to: number };

function Lines({ fam, color, skipAxis, axisOnly }: { fam: Family[]; color: string; skipAxis?: boolean; axisOnly?: boolean }) {
  const w = 1056;
  return (
    <g stroke={color} shapeRendering="crispEdges">
      {fam.map((f, j) => {
        const ks = Array.from({ length: f.to - f.from + 1 }, (_, i) => f.from + i).filter((k) => (axisOnly ? k === 0 : !(skipAxis && k === 0)));
        return ks.map((k) => {
          const y = f.y0 + k * f.step;
          return <line key={`${j}:${k}`} x1={-4} y1={y - f.slope * 4} x2={w} y2={y + f.slope * w} />;
        });
      })}
    </g>
  );
}

const leftGrid: Family[] = [
  { y0: 210, slope: 0.2418, step: 58.93, from: -9, to: 19 },
  { y0: 1133.2, slope: -1.0606, step: 123.65, from: -10, to: 11 },
];
const rightGrid: Family[] = [
  { y0: 511.1, slope: 0.1841, step: 45.8, from: -16, to: 17 },
  { y0: 583.1, slope: -0.4591, step: 71.85, from: -9, to: 17 },
];

function ViewLabel({ parts, className }: { parts: string[]; className: string }) {
  return (
    <div className={`absolute flex gap-[5px] text-[16px] text-[#cacaca] ${className}`}>
      {parts.map((p) => (
        <button key={p} type="button" className="whitespace-pre">
          {p}
        </button>
      ))}
    </div>
  );
}

function LeftView() {
  return (
    <div className="min-w-0 flex-1">
      <div className="relative h-full border-2 border-[#7b682a] bg-[#343434]">
        <svg viewBox="0 0 1048 1278" preserveAspectRatio="xMidYMin slice" className="absolute inset-0 h-full w-full">
          <defs>
            <clipPath id="base">
              <path d="M419.700 562.700L510 466.200l189.700 45.900V1278h-280z" />
            </clipPath>
            <linearGradient id="faceL" x1="0" x2="1">
              <stop offset="0" stopColor="#828282" />
              <stop offset=".4" stopColor="#898989" />
              <stop offset=".7" stopColor="#969696" />
              <stop offset="1" stopColor="#8a8a8a" />
            </linearGradient>
            <linearGradient id="well" x1="0" x2="1">
              <stop offset="0" stopColor="#888" />
              <stop offset=".3" stopColor="#b0b0b0" />
              <stop offset=".6" stopColor="#b4b4b4" />
              <stop offset="1" stopColor="#909090" />
            </linearGradient>
            <linearGradient id="glow" x1="0" y1="0" x2="0" y2="1">
              <stop offset="0" stopColor="#fff" stopOpacity="0" />
              <stop offset="1" stopColor="#fff" stopOpacity=".24" />
            </linearGradient>
          </defs>
          <Lines fam={leftGrid} color="#4b4b4b" skipAxis />
          <Lines fam={leftGrid} color="#000" axisOnly />
          <path d="M419.700 562.700L608.700 608.200V1278h-189z" fill="#7c7c7c" />
          <path d="M608.700 608.200l91-96.100V1278h-91z" fill="#828282" />
          <path d="M419.700 562.700L510 466.200l189.700 45.900-91 96.100z" fill="#929292" />
          <path d="M529.700 559v125.900l40.600 9.900 19.400-20.200V560z" fill="url(#well)" />
          <g clipPath="url(#base)">
            <Lines fam={leftGrid} color="#484848" skipAxis />
            <line x1="0" y1="1133.200" x2="544" y2="556.200" stroke="#000" shapeRendering="crispEdges" />
          </g>
          <path d="M489.700 187.100l94.600 22.900v362.200l-94.600-22.900z" fill="url(#faceL)" fillOpacity=".95" />
          <path d="M584.300 210l45.400-47.400v361.800l-45.400 47.800z" fill="#848484" fillOpacity=".95" />
          <path d="M510 466.200l119.700 29v29.200l-45.400 47.800-94.600-22.900v-61.500z" fill="#fff" fillOpacity=".12" />
          <path d="M534.700 198v364l46 10 4-5V210z" fill="url(#glow)" />
          <path d="M489.700 187.100l45-47.900 95 23.400-45.400 47.400z" fill="#959595" />
          <path d="M529.700 180.400l19.600-20.200 40.400 9.100-19.400 20.600z" fill="#7f7f7f" />
          <g shapeRendering="crispEdges" fill="none">
            <path d="M534.700 184v317.400l95 23M534.700 501.400l-45 47.900M510 466.200V1278" stroke="#777" />
            <g stroke="#fff">
              <path d="M489.700 187.100l45-47.900 95 23.400-45.400 47.400zM529.700 180.400l19.600-20.200 40.400 9.100-19.400 20.600z" />
              <path d="M489.700 187.100l40-6.700M534.700 139.200l14.600 21M629.700 162.600l-40 6.700M584.300 210l-14-20.100" />
              <path d="M489.700 187.100v362.200l94.600 22.900V210M584.300 572.200l45.400-47.800V162.600" />
              <path d="M419.700 562.700L510 466.200l189.700 45.900-91 96.100zM419.700 562.700V1278M608.700 608.200V1278M699.700 512.100V1278" />
              <path d="M529.700 684.900l19.600-19.800 40.400 9.500-19.400 20.200z" />
            </g>
            <path d="M529.700 180.400v504.500M549.300 160.200v504.900M589.700 169.300v505.300" stroke="#d00000" />
            <path d="M570.300 190v504.800" stroke="#700000" />
          </g>
          <path d="M529.700 433v-20" stroke="#555" />
          <path d="M543 435l-13-3 8-8" fill="none" stroke="#c22" />
          <g className="font-['DejaVu_Sans'] text-[14px] font-bold">
            <text x="529" y="419" fill="#4a4a4a">z</text>
            <text x="536" y="426" fill="#d02020">y</text>
            <text x="543" y="436" fill="#d02020">x</text>
          </g>
          <g fill="none" shapeRendering="crispEdges">
            <path d="M24.500 1253v-24" stroke="#2020d8" />
            <path d="M25 1253l12-13" stroke="#0a9a0a" />
            <path d="M25 1253l22 4" stroke="#d00000" />
          </g>
          <g className="font-['DejaVu_Sans'] text-[14px]">
            <text x="24" y="1230" fill="#2020e0">z</text>
            <text x="35" y="1242" fill="#0a9a0a">y</text>
            <text x="47" y="1258" fill="#d00000">x</text>
          </g>
          <ellipse cx="994" cy="71" rx="31" ry="17" fill="#2c2c2c" stroke="#8c9096" strokeWidth="7" />
          <path d="M974.300 44.700L987 34l25 5-12 9.700z" fill="#b4b4b4" />
          <path d="M974.300 44.700l25.700 4v27.300l-24.700-5.700z" fill="#9c9c9c" />
          <path d="M1000 48.700L1012 39l-.7 23.300L1000 76z" fill="#868686" />
          <g className="font-['Liberation_Sans'] font-bold">
            <text x="977" y="66" fill="#6c6c6c" className="text-[7px]">FRONT</text>
            <text x="963" y="63" fill="#ddd" className="text-[9px]">W</text>
            <text x="976" y="92" fill="#ddd" className="text-[9px]">S</text>
            <text x="1023" y="81" fill="#ddd" className="text-[9px]">E</text>
          </g>
        </svg>
        <ViewLabel parts={["[ + ]", "[Orthographic ]", "[Standard ]", "[Edged Faces ]"]} className="left-1 top-1" />
      </div>
    </div>
  );
}

function RightView() {
  return (
    <div className="relative min-w-0 flex-1 bg-[#343434]">
      <svg viewBox="-1 0 1052 1282" preserveAspectRatio="xMidYMin slice" className="absolute inset-0 h-full w-full">
        <Lines fam={rightGrid} color="#4b4b4b" skipAxis />
        <Lines fam={rightGrid} color="#000" axisOnly />
        <g shapeRendering="crispEdges" fill="none">
          <path d="M435.300 77v506.200l111 20.400M435.300 583.200l-70.600 32.100M414.300 556.600V1282" stroke="#8a8a8a" />
          <path d="M416.700 105.600v706.100M446.700 91.800V798M494.300 101v705.600" stroke="#d00000" />
          <path d="M464.300 114.800v705.100" stroke="#800000" />
          <g stroke="#fff">
            <path d="M364.700 109.700L435.300 77l111 20.400-71 32.700z" />
            <path d="M416.700 105.600l30-13.800 47.600 9.200-30 13.800z" />
            <path d="M364.700 109.700l52-4.100M435.300 77l11.400 14.800M546.300 97.400l-52 3.600M475.300 130.100l-11-15.300" />
            <path d="M364.700 109.700v505.600l110.600 21.400V130.100M475.300 636.700l71-33.100V97.400" />
            <path d="M273.700 621.400l141.600-64.800 222 40.800-142 65.400zM273.700 621.400V1282M495.300 662.800V1282M637.300 597.400V1282" />
            <path d="M416.700 811.700l30-13.700 47.600 8.600-30 13.300z" />
          </g>
        </g>
        <path d="M464.300 467v-18" stroke="#888" />
        <path d="M456 465l8 2 10-4" fill="none" stroke="#c22" />
        <g className="font-['DejaVu_Sans'] text-[13px] font-bold">
          <text x="450" y="464" fill="#d02020">y</text>
          <text x="463" y="454" fill="#666">z</text>
          <text x="472" y="463" fill="#d02020">x</text>
        </g>
        <g fill="none" shapeRendering="crispEdges">
          <path d="M26.500 1252v-22" stroke="#2020d8" />
          <path d="M26 1252l-14-4" stroke="#0a9a0a" />
          <path d="M26 1252l13-5" stroke="#d00000" />
        </g>
        <g className="font-['DejaVu_Sans'] text-[14px]">
          <text x="25" y="1230" fill="#2020e0">z</text>
          <text x="4" y="1250" fill="#0a9a0a">y</text>
          <text x="38" y="1248" fill="#d00000">x</text>
        </g>
        <ellipse cx="994" cy="73" rx="31" ry="12" fill="#2c2c2c" stroke="#8c9096" strokeWidth="6" />
        <path d="M976 44l17-6 20 4-14 7z" fill="#b4b4b4" />
        <path d="M976 44l23 5v26l-21-5z" fill="#9c9c9c" />
        <path d="M999 49l14-7-1 25-13 8z" fill="#868686" />
        <g className="font-['Liberation_Sans'] font-bold">
          <text x="979" y="63" fill="#6c6c6c" className="text-[8px]">LEFT</text>
          <text x="962" y="86" fill="#ccc" className="text-[8px]">W</text>
          <text x="1022" y="84" fill="#ccc" className="text-[8px]">S</text>
        </g>
      </svg>
      <ViewLabel parts={["[ + ]", "[Orthographic ]", "[Standard ]", "[Wireframe ]"]} className="left-1.5 top-1.5" />
    </div>
  );
}

/* ---------- command panel ---------- */

const cmdTabs: [string, React.ReactNode][] = [
  ["Create", <path key="c" d="M12 1v22M1 12h22" stroke="#a0a0a0" strokeWidth="4" />],
  [
    "Modify",
    <g key="m" fill="none" stroke={T} strokeWidth="1.500">
      <path d="M4 3h16M4 21h16M3 4v16M21 4v16" />
      <path d="M1 1h4v4H1zM19 1h4v4h-4zM1 19h4v4H1zM19 19h4v4h-4z" fill="#444" />
      <path d="M6 19C7 10 11 6 18 5" stroke="#eee" strokeWidth="2" />
    </g>,
  ],
  [
    "Hierarchy",
    <g key="h">
      <path d="M4 1h16v7H4z" fill="#a0a0a0" />
      <path d="M12 8v4M4 18v-6h16v6" fill="none" stroke="#3d8f8f" strokeWidth="2" />
      <path d="M2 18h5v5H2zM17 18h5v5h-5z" fill="#3d8f8f" />
    </g>,
  ],
  [
    "Motion",
    <g key="mo" fill="none" stroke="#3d8f8f" strokeWidth="1.500">
      <circle cx="8" cy="12" r="8" />
      <circle cx="11" cy="12" r="8" />
      <circle cx="15" cy="12" r="9" fill="#a0a0a0" stroke="#3a3a3a" />
    </g>,
  ],
  ["Display", <path key="d" d="M0 3h24v14H0zM6 20h12v2H6z" fill="#a0a0a0" />],
  ["Utilities", <path key="u" d="M2 2l4 3v3l-3 1-3-4c0 5 4 8 8 6l12 12 3-3L11 8C13 3 8-1 2 1z" fill="#a0a0a0" />],
];

function ModifierRow({ children, lead, boxed }: Kids & { lead: React.ReactNode; boxed?: boolean }) {
  return (
    <li className="flex h-[25px] items-center border-b border-[#6a6a6a]">
      <span className="flex w-8 shrink-0 justify-center">{lead}</span>
      <span className={`flex h-[23px] flex-1 items-center justify-between pr-1.5 ${boxed ? "-ml-1 border border-[#5f8bc4] pl-px" : "pl-[26px]"}`}>
        {children}
        <svg viewBox="0 0 16 16" className="h-4 w-4">
          <path d="M15 1l-2 14-12-6z" fill="none" stroke="#ccc" strokeWidth="1.200" />
        </svg>
      </span>
    </li>
  );
}

function StackTools() {
  return (
    <div className="mt-2 flex h-[34px] items-center pl-1.5">
      <button type="button" aria-label="Pin stack" className="w-8">
        <svg viewBox="0 0 28 28" className="h-7 w-7">
          <path d="M1 27l9-11-3-3 6-1 5-6-1-4 10 9-4 0-6 6-1 6-4-4z" fill={L} />
        </svg>
      </button>
      <span className="ml-2 h-4 w-0.5 bg-[#1f1f1f]" />
      <button type="button" aria-label="Show end result" className="ml-3 w-7">
        <svg viewBox="0 0 28 28" className="h-7 w-7">
          <path d="M8 1h12M10 2v25h8V2" fill="none" stroke={L} strokeWidth="2" />
          <path d="M11 14h6v12h-6z" fill={T} />
        </svg>
      </button>
      <span className="ml-3 h-4 w-0.5 bg-[#1f1f1f]" />
      <button type="button" aria-label="Make unique" className="ml-2.5 w-8">
        <svg viewBox="0 0 30 28" className="h-7 w-[30px]" fill="#5a5a5a" stroke="#2a2a2a" strokeWidth="1.500">
          <circle cx="8" cy="7" r="6" />
          <path d="M14 4h12v10h3l-5 6-5-6h3V8h-8z" />
          <circle cx="14" cy="21" r="6" />
          <circle cx="24" cy="22" r="5" />
        </svg>
      </button>
      <button type="button" aria-label="Remove modifier" className="ml-2 w-7">
        <svg viewBox="0 0 28 28" className="h-7 w-7" fill="#6c6c6c" stroke="#2a2a2a" strokeWidth="2">
          <path d="M2 4h8V1h8v3h8v4H2zM3 9h22v18H3z" />
          <path d="M8 12v12M14 12v12M20 12v12" stroke="#2a2a2a" strokeWidth="3.500" />
        </svg>
      </button>
      <span className="ml-3 h-4 w-0.5 bg-[#1f1f1f]" />
      <button type="button" aria-label="Configure modifier sets" className="ml-2.5 w-8">
        <svg viewBox="0 0 32 28" className="h-7 w-8">
          <path d="M1 2h24v25H1z" fill={L} />
          <path d="M3 5h20M4 10h8v6H4zM15 10h7v6h-7zM4 19h8v6H4zM15 19h7v6h-7z" fill="none" stroke="#333" strokeWidth="1.500" />
          <path d="M13 17l2-5L28 1l3 3-12 12z" fill={O} stroke="#7a5200" strokeWidth=".7" />
        </svg>
      </button>
    </div>
  );
}

function LeftColumn() {
  const sub = "flex h-8 w-9 items-center justify-center rounded";
  return (
    <div className="flex w-[290px] shrink-0 flex-col overflow-hidden">
      <div className="mt-2.5 flex gap-[7px]">
        <input aria-label="Object name" defaultValue="Box002" className="h-[30px] min-w-0 flex-1 border border-[#3b3b3b] bg-[#656565] px-1 pb-0.5 text-[#d6d6d6]" />
        <button type="button" aria-label="Object colour" className="h-[30px] w-[26px] border-2 border-black bg-[#e3f19b]" />
      </div>
      <Combo label="Modifier List" value="Modifier List" className="mt-3.5 h-7 [&>select]:pl-1" />
      <ul className="mt-[5px] h-[155px] border-2 border-white text-[#f2f2f2]">
        <ModifierRow lead={<svg viewBox="0 0 24 24" className="h-[22px] w-[22px]">{filters[11]}</svg>}>TurboSmooth</ModifierRow>
        <ModifierRow
          boxed
          lead={
            <svg viewBox="0 0 8 10" className="mr-1 h-2.5 w-2">
              <path d="M1 0v10l6-5z" fill="#ddd" />
            </svg>
          }
        >
          Editable Poly
        </ModifierRow>
      </ul>
      <StackTools />
      <div className="mb-1.5 mt-[17px] flex items-center gap-2 px-2">
        <span className="h-0.5 flex-1 bg-[#646464]" />
        <Grip className="h-1.5 w-7" />
        <span className="h-0.5 flex-1 bg-[#646464]" />
      </div>
      <div className="flex min-h-0 flex-1 gap-1">
        <div className="flex min-w-0 flex-1 flex-col gap-1 overflow-hidden">
          <Rollout title="Selection" open>
            <div className="flex h-[38px] items-center pl-[43px] pt-[5px]">
              <button type="button" aria-label="Vertex" className={sub}>
                <svg viewBox="0 0 28 28" className="h-7 w-7">
                  <path d="M6 13v6M3 16h6M22 4v6M19 7h6M18 20v6M15 23h6" stroke={T} strokeWidth="2.500" />
                </svg>
              </button>
              <button type="button" aria-label="Edge" className={`${sub} bg-[#5f8bc4]`}>
                <svg viewBox="0 0 24 24" className="h-6 w-6" fill="none">
                  <path d="M20 3l-2 18L4 14z" stroke="#2f4a55" strokeWidth="4" />
                  <path d="M20 3l-2 18L4 14z" stroke={T} strokeWidth="2" />
                </svg>
              </button>
              <button type="button" aria-label="Border" className={sub}>
                <svg viewBox="0 0 28 28" className="h-7 w-7">
                  <path d="M7 5c20-3 20 20 0 18 8-6 8-12 0-18z" fill="none" stroke={T} strokeWidth="2" />
                </svg>
              </button>
              <button type="button" aria-label="Polygon" className={sub}>
                <svg viewBox="0 0 28 28" className="h-7 w-7">
                  <path d="M6 5h17v17H6z" fill={T} />
                </svg>
              </button>
              <button type="button" aria-label="Element" className={sub}>
                <svg viewBox="0 0 28 28" className="h-7 w-7">
                  <path d="M14 3l11 5v11l-11 6-11-6V8z" fill={T} />
                  <path d="M3 8l11 5 11-5M14 13v12" fill="none" stroke="#333" />
                </svg>
              </button>
            </div>
            <div className="mt-[7px] pl-[30px]">
              <Check label="By Vertex" className="h-[30px]" />
              <Check label="Ignore Backfacing" className="h-[30px]" />
              <div className="flex h-[30px] items-center">
                <Check label="By Angle:" off className="w-[104px]" />
                <Spin label="Angle" value="45,0" off className="w-[116px] [&>input]:pl-0" />
              </div>
            </div>
            <div className="mt-1 grid grid-cols-2 gap-x-2.5 gap-y-1.5 pl-[27px] pr-[25px]">
              <Btn>Shrink</Btn>
              <Btn>Grow</Btn>
              {["Ring", "Loop"].map((n) => (
                <div key={n} className="flex items-start gap-1">
                  <Btn className="flex-1">{n}</Btn>
                  <span className="flex h-[23px] w-[18px] items-center justify-center border border-[#484848] bg-[#656565] text-[#ddd]">
                    <Arrows />
                  </span>
                </div>
              ))}
            </div>
            <Group title="Preview Selection" className="-mb-px ml-4 mr-[22px] mt-[7px]">
              <div className="flex h-[39px] pb-[3px]">
                <Radio name="preview" label="Off" on className="ml-0.5 w-[75px]" />
                <Radio name="preview" label="SubObj" className="w-[92px]" />
                <Radio name="preview" label="Multi" />
              </div>
            </Group>
            <p className="mb-[41px] mr-[33px] mt-[11px] text-right leading-5 text-[#f2f2f2]">4 Edges Selected</p>
          </Rollout>
          <Rollout title="Soft Selection" />
          <Rollout title="Edit Edges" open>
            <div className="flex flex-col pb-3 pl-[26px] pr-[29px] pt-[9px]">
              <Btn>Insert Vertex</Btn>
              <div className="mt-[9px] grid grid-cols-2 gap-x-2 gap-y-[9px]">
                <Btn>Remove</Btn>
                <Btn>Split</Btn>
                <WithSettings name="Extrude">Extrude</WithSettings>
                <WithSettings name="Weld">Weld</WithSettings>
                <WithSettings name="Chamfer">Chamfer</WithSettings>
                <Btn>Target Weld</Btn>
                <WithSettings name="Bridge">Bridge</WithSettings>
                <WithSettings name="Connect">Connect</WithSettings>
              </div>
              <Btn className="mt-3">Create Shape From Selection</Btn>
              <Group title="Edge Properties" className="-mx-[3px] mt-1">
                <div className="flex flex-col gap-1.5 pb-[9px] pl-[7px] pr-1.5 pt-2 text-[#f2f2f2]">
                  <div className="flex items-center pl-[19px]">
                    <span className="w-[65px]">Weight:</span>
                    <Spin label="Weight" value="1,0" className="w-[107px]" />
                  </div>
                  <div className="flex items-center pl-[19px]">
                    <span className="w-[65px]">Crease:</span>
                    <Spin label="Crease" value="0,0" className="w-[107px]" />
                  </div>
                  <div className="mt-0.5 grid grid-cols-2 gap-[7px]">
                    <Btn>Hard</Btn>
                    <Btn>Smooth</Btn>
                  </div>
                  <div className="mt-[5px] flex items-center gap-[3px]">
                    <button type="button" aria-label="Hard edge colour" className="h-7 w-[30px] border border-black bg-[#00f870]" />
                    <Check label="Display Hard Edges" />
                  </div>
                </div>
              </Group>
              <div className="-mr-0.5 mt-[10px] grid grid-cols-2 gap-x-2">
                <Btn>Edit Tri.</Btn>
                <Btn>Turn</Btn>
              </div>
            </div>
          </Rollout>
          <Rollout title="Subdivision Displacement" />
          <section aria-label="Subdivision" className="flex-1 rounded-t border border-[#474747] bg-[#525252]" />
        </div>
        <div className="mb-1 w-2 rounded bg-[#393939]">
          <div className="h-[97%] rounded border border-[#3c3c3c] bg-[#575757]" />
        </div>
      </div>
    </div>
  );
}

function SpinRow({ label, value, check }: { label: string; value: string; check?: boolean }) {
  return (
    <div className="flex items-center gap-1.5">
      {check && <input type="checkbox" aria-label={`Render ${label}`} className="block h-[18px] w-[18px] appearance-none border border-[#484848] bg-[#656565]" />}
      <span className="flex-1 text-right text-[#f2f2f2]">{label}:</span>
      <Spin label={label} value={value} off={check} className="w-[86px]" />
    </div>
  );
}

function RightColumn() {
  return (
    <div className="flex min-h-0 min-w-0 flex-1 gap-1 pt-[3px]">
      <div className="flex w-[279px] flex-col gap-1 overflow-hidden">
        <Rollout title="Subdivision Surface" open>
          <div className="pb-[26px] pl-[23px] pr-[27px] pt-1.5">
            <div className="pl-[9px]">
              <Check label="Smooth Result" on className="mb-[3px] h-[30px]" />
              <Check label="Use NURMS Subdivision" className="h-[30px]" />
              <Check label="Isoline Display" on className="h-[30px]" />
              <div className="flex h-[30px] items-center">
                <Check label="Show Cage......" on className="flex-1" />
                <button type="button" aria-label="Cage colour" className="mr-[11px] h-[23px] w-[23px] border border-black bg-[#fdc400]" />
                <button type="button" aria-label="Selected cage colour" className="mr-3 h-[23px] w-[23px] border border-black bg-[#e3e48d]" />
              </div>
            </div>
            <Group title="Display" className="-mt-px">
              <div className="flex flex-col gap-2 pb-[9px] pr-[7px]">
                <SpinRow label="Iterations" value="1" />
                <SpinRow label="Smoothness" value="1,0" />
              </div>
            </Group>
            <Group title="Render" className="-mt-px">
              <div className="flex flex-col gap-2 pb-3 pl-2 pr-[7px]">
                <SpinRow label="Iterations" value="0" check />
                <SpinRow label="Smoothness" value="1,0" check />
              </div>
            </Group>
            <Group title="Separate By" className="-mt-px">
              <div className="pb-1 pl-[9px] pt-1.5">
                <Check label="Smoothing Groups" className="h-[27px]" />
                <Check label="Materials" className="h-[27px]" />
              </div>
            </Group>
            <Group title="Update Options">
              <div className="pb-[13px] pl-[9px] pt-px">
                <Radio name="update" label="Always" on className="h-[25px]" />
                <Radio name="update" label="When Rendering" className="h-[25px]" />
                <Radio name="update" label="Manually" className="h-[25px]" />
                <Btn className="ml-[31px] mt-1.5 h-[30px] w-[143px]">Update</Btn>
              </div>
            </Group>
          </div>
        </Rollout>
        <Rollout title="Edit Geometry" open>
          <div className="flex flex-col pb-4 pl-[25px] pr-[29px] pt-2">
            <Btn>Repeat Last</Btn>
            <Group title="Constraints" className="-mx-0.5">
              <div className="grid grid-cols-[90px_1fr] pb-1 pl-3 pt-[3px]">
                <Radio name="constraint" label="None" on className="h-7" />
                <Radio name="constraint" label="Edge" className="h-7" />
                <Radio name="constraint" label="Face" className="h-7" />
                <Radio name="constraint" label="Normal" className="h-7" />
              </div>
            </Group>
            <div className="mt-[13px] flex items-center pl-4">
              <Check label="Preserve UVs" className="w-[138px]" />
              <Settings label="Preserve UVs" />
            </div>
            <div className="mt-[9px] grid grid-cols-2 gap-x-2 gap-y-[9px]">
              <Btn>Create</Btn>
              <Btn>Collapse</Btn>
              <WithSettings name="Attach">Attach</WithSettings>
              <Btn>Detach</Btn>
            </div>
            <div className="-mx-0.5 mt-2 grid grid-cols-2 gap-x-2 gap-y-[9px] rounded-sm border border-[#3b3b3b] px-1 pb-[7px] pt-2">
              <Btn>Slice Plane</Btn>
              <Check label="Split" />
              <Btn off>Slice</Btn>
              <Btn off>Reset Plane</Btn>
              <Btn>QuickSlice</Btn>
              <Btn>Cut</Btn>
            </div>
            <div className="mt-2 grid grid-cols-2 gap-x-2 gap-y-[9px]">
              <WithSettings name="MSmooth">MSmooth</WithSettings>
              <WithSettings name="Tessellate">Tessellate</WithSettings>
              <div className="col-span-2 flex gap-[7px]">
                <Btn className="flex-1">Make Planar</Btn>
                <Btn className="w-[25px]">X</Btn>
                <Btn className="w-[25px]">Y</Btn>
                <Btn className="w-[25px]">Z</Btn>
              </div>
              <Btn>View Align</Btn>
              <Btn>Grid Align</Btn>
              <div className="col-span-2 flex justify-center gap-px">
                <Btn className="w-[85px]">Relax</Btn>
                <Settings label="Relax" />
              </div>
              <Btn off>Hide Selected</Btn>
              <Btn off>Unhide All</Btn>
              <div className="col-span-2 flex justify-center">
                <Btn off className="w-[137px]">Hide Unselected</Btn>
              </div>
            </div>
            <p className="mt-1.5 pl-[5px] leading-5 text-[#f2f2f2]">Named Selections:</p>
            <div className="mt-1 grid grid-cols-2 gap-x-2">
              <Btn label="Copy selection" />
              <Btn off label="Paste selection" />
            </div>
          </div>
        </Rollout>
      </div>
      <div className="mb-1 w-[9px] rounded bg-[#393939]">
        <div className="h-[93%] rounded border border-[#3c3c3c] bg-[#575757]" />
      </div>
    </div>
  );
}

function CommandPanel() {
  return (
    <aside className="flex w-[600px] shrink-0 flex-col overflow-hidden pl-[7px] text-[15px]">
      <Grip className="ml-0.5 mr-[5px] mt-2.5 h-1.5" />
      <div className="mt-[5px] flex gap-0.5">
        {cmdTabs.map(([n, icon], i) => (
          <button
            key={n}
            type="button"
            aria-label={n}
            className={`flex h-10 w-[46px] items-center justify-center rounded-t-md border border-b-0 border-[#393939] ${i === 1 ? "bg-[#444]" : "bg-[#3a3a3a]"}`}
          >
            <svg viewBox="0 0 24 24" className="h-6 w-6" fill="none">
              {icon}
            </svg>
          </button>
        ))}
      </div>
      <div className="flex min-h-0 flex-1 gap-px border border-[#393939] pl-1">
        <LeftColumn />
        <RightColumn />
      </div>
    </aside>
  );
}

/* ---------- bottom ---------- */

function TimeArea() {
  return (
    <div className="flex shrink-0">
      <Grip vertical className="ml-[3px] mr-[5px] mt-[11px] h-16 w-1.5" />
      <div className="min-w-0 flex-1">
        <div className="flex h-[38px] items-center gap-[3px] border-b-2 border-black pb-1 pt-2 text-[15px] text-[#dedede]">
          <button type="button" aria-label="Previous frame" className="h-[26px] w-[21px] rounded bg-[#656565]">&lt;</button>
          <button type="button" className="h-[26px] w-[184px] rounded bg-[#656565]">0 / 100</button>
          <button type="button" aria-label="Next frame" className="h-[26px] w-[21px] rounded bg-[#656565]">&gt;</button>
        </div>
        <div className="flex h-[38px]">
          <div className="flex w-[73px] shrink-0 items-center justify-center pr-3">
            <svg viewBox="0 0 24 16" className="h-4 w-6" fill="none">
              <path d="M3 0v16" stroke={L} strokeWidth="5" strokeDasharray="2.500 1.500" />
              <path d="M8 8c3-9 5-9 7 0s4 9 8 0" stroke={T} strokeWidth="1.500" />
            </svg>
          </div>
          <ol className="mb-0.5 mr-[73px] flex min-w-0 flex-1 bg-[#2a2a2a] text-[15px] text-[#bdbdbd]">
            {Array.from({ length: 101 }, (_, i) => (
              <li key={i} className="relative flex min-w-0 flex-1 justify-center">
                {i === 0 && <span className="absolute inset-y-0 w-3 bg-[#847c22]" />}
                <span className={`w-px bg-[#6e6e6e] ${i % 5 === 0 ? "h-full" : "h-[17px]"}`} />
                {i % 5 === 0 && (
                  <span className={`absolute bottom-0 leading-[17px] ${i === 0 ? "text-[#e8e26a]" : "bg-[#2a2a2a]"}`}>{i}</span>
                )}
              </li>
            ))}
          </ol>
        </div>
      </div>
    </div>
  );
}

function Icon({ label, children, fly }: Kids & { label: string; fly?: boolean }) {
  return (
    <button type="button" aria-label={label} className="relative flex h-7 w-7 items-center justify-center">
      <svg viewBox="0 0 24 24" className="h-6 w-6" fill="none">
        {children}
      </svg>
      {fly && (
        <svg viewBox="0 0 6 6" className="absolute -bottom-1 -right-1 h-1.5 w-1.5">
          <path d="M6 0v6H0z" fill="#eee" />
        </svg>
      )}
    </button>
  );
}

function Coord({ axis, value }: { axis: string; value: string }) {
  return (
    <label className="flex items-center gap-1.5 text-[#f2f2f2]">
      {axis}:
      <input defaultValue={value} className="h-[26px] w-[87px] border border-[#4b4b4b] bg-[#595959] px-1 text-[#8e8e8e]" />
    </label>
  );
}

function StatusBar() {
  return (
    <footer className="flex h-[78px] shrink-0 pt-1 text-[15px] text-[#f2f2f2]">
      <div className="ml-1 flex w-[149px] flex-col gap-px">
        <textarea aria-label="Macro recorder" className="h-[36px] resize-none border-2 border-b-white border-l-[#888] border-r-white border-t-[#888] bg-[#dcc3c3]" />
        <input
          aria-label="MAXScript Mini Listener"
          placeholder="MAXScript Mini Listener"
          className="h-[36px] border-2 border-b-white border-l-[#888] border-r-white border-t-[#888] bg-white pb-3 pl-0.5 pr-1 font-['Liberation_Mono'] text-[18px] text-[#777] placeholder:text-[#777]"
        />
      </div>
      <div className="ml-1 border-l-2 border-[#222] pl-[5px]">
        <p className="mt-[7px] leading-6">1 Object Selected</p>
        <p className="mt-[13px] leading-6">Redo</p>
      </div>
      <div className="ml-auto flex w-[659px] flex-col">
        <div className="flex h-[38px] items-center">
          <Icon label="Isolate selection">
            <path d="M2 7V2h5M17 2h5v5M22 17v5h-5M7 22H2v-5" stroke={L} strokeWidth="1.500" />
            <path d="M7 6h10v11H7z" fill={T} />
          </Icon>
          <span className="w-3" />
          <Icon label="Selection lock">
            <path d="M8 11V6c0-5 8-5 8 0v5" stroke={L} strokeWidth="2.500" />
            <path d="M4 10h16v13H4z" fill={L} />
            <path d="M12 14v5" stroke="#333" strokeWidth="3" />
          </Icon>
          <span className="w-3" />
          <Icon label="Absolute mode">
            <path d="M2 2h20v20H2z" stroke={L} strokeWidth="3" />
            <path d="M12 3v18M3 12h18" stroke={L} strokeWidth="2" />
            <circle cx="12" cy="12" r="4" fill="#444" stroke={L} strokeWidth="2" />
          </Icon>
          <div className="ml-2.5 flex gap-5">
            <Coord axis="X" value="78,211" />
            <Coord axis="Y" value="-142,38" />
            <Coord axis="Z" value="0,0" />
          </div>
          <span className="ml-[21px] whitespace-nowrap">Grid = 10,0</span>
        </div>
        <div className="mt-[3px] flex items-center pl-[458px]">
          <button type="button" aria-label="Time tag" className="flex h-[31px] w-[33px] items-center justify-center rounded bg-[#5f8bc4]">
            <svg viewBox="0 0 24 24" className="h-6 w-6" fill="none" stroke="#22303f">
              <path d="M12 1l9 5v12l-9 5-9-5V6zM12 6l5 3v6l-5 3-5-3V9zM7 9l5 3 5-3M12 12v6" />
            </svg>
          </button>
          <button type="button" className="ml-1.5 text-[#d8d8d8]">Add Time Tag</button>
        </div>
      </div>
      <div className="flex w-[192px] flex-col">
        <div className="flex h-9 items-center gap-[7px]">
          <Icon label="Go to start"><path d="M2 3v18M3 12l9-9v18zM13 12l9-9v18z" fill={L} stroke={L} /></Icon>
          <Icon label="Previous"><path d="M1 12l10-9v18z" fill={L} /><path d="M15 3v18M20 3v18" stroke={L} strokeWidth="3" /></Icon>
          <Icon label="Play animation" fly><path d="M3 1v23l19-12z" fill={L} /></Icon>
          <Icon label="Next"><path d="M23 12L13 3v18z" fill={L} /><path d="M4 3v18M9 3v18" stroke={L} strokeWidth="3" /></Icon>
          <Icon label="Go to end"><path d="M22 3v18M21 12l-9-9v18zM11 12L2 3v18z" fill={L} stroke={L} /></Icon>
        </div>
        <div className="flex h-[30px] items-center gap-[5px]">
          <Icon label="Key mode"><path d="M10 6v12l-8-6zM14 6v12l8-6z" fill={L} /></Icon>
          <Spin label="Current frame" value="0" className="h-[26px] w-[106px]" />
          <Icon label="Time configuration">
            <circle cx="10" cy="9" r="8" fill={L} />
            <path d="M10 4v6h4" stroke="#333" strokeWidth="1.500" />
            <circle cx="17" cy="17" r="4" fill="#444" stroke={O} strokeWidth="3" strokeDasharray="3 1" />
          </Icon>
        </div>
      </div>
      <button type="button" aria-label="Set keys" className="mb-1 mt-[3px] flex w-[62px] items-center justify-center rounded bg-[#656565]">
        <svg viewBox="0 0 48 48" className="h-12 w-12" fill="none">
          <path d="M21 4v38M3 23h37" stroke={L} strokeWidth="7" />
          <path d="M44 24L29 40" stroke="#444" strokeWidth="6" />
          <path d="M44 24L31 37M40 28l5 4" stroke={T} strokeWidth="3" />
          <circle cx="28" cy="40" r="5" fill="#656565" stroke={T} strokeWidth="3" />
        </svg>
      </button>
      <div className="ml-1.5 mt-[3px] flex w-[70px] flex-col gap-0.5 text-[#dcdcdc]">
        <button type="button" className="h-8 rounded bg-[#656565]">Auto</button>
        <button type="button" className="h-8 rounded bg-[#656565]">Set K.</button>
      </div>
      <div className="ml-[5px] mt-[3px] flex w-[172px] flex-col gap-2 text-[#dcdcdc]">
        <Combo label="Key set" value="Selected" className="h-[26px]" />
        <div className="flex items-center gap-2.5">
          <Icon label="Tangents" fly>
            <path d="M3 23C8 21 6 6 9 5M21 23C16 21 18 6 15 5M3 4h18" stroke={T} strokeWidth="2" />
            <path d="M1 2h5v5H1zM18 2h5v5h-5zM9 1h6v6H9z" fill={L} />
          </Icon>
          <button type="button" className="h-8 flex-1 rounded bg-[#656565]">Filters...</button>
        </div>
      </div>
      <div className="ml-4 mr-3.5 mt-1 grid w-[134px] grid-cols-4 content-start gap-x-2 gap-y-[5px]">
        <Icon label="Zoom"><circle cx="15" cy="8" r="6" stroke={L} strokeWidth="3" /><path d="M11 13l-9 10" stroke={L} strokeWidth="3" /></Icon>
        <Icon label="Zoom all">
          <path d="M7 2h7v7H7zM15 2h8v7h-8zM15 10h8v7h-8z" fill={T} />
          <circle cx="10" cy="13" r="4" fill="#444" stroke={L} strokeWidth="2" />
          <path d="M7 16l-6 7" stroke={L} strokeWidth="2" />
        </Icon>
        <Icon label="Zoom extents" fly>
          <path d="M12 3l7 3v10l-7 5-7-5V6z" fill={T} />
          <path d="M5 7l7 3 7-3M12 10v11" stroke="#333" />
          <path d="M1 6V1h5M18 1h5v5M23 18v5h-5M6 23H1v-5" stroke={L} />
        </Icon>
        <Icon label="Zoom extents all" fly>
          <path d="M10 4l6-4 7 4v12l-7 4-6-4z" fill={T} />
          <path d="M10 5l6 3 7-3M16 8v12" stroke="#444" />
          <path d="M6 8l5 5-5 4-5-4zM6 16l5 3-5 5-5-5z" fill={L} stroke="#444" />
        </Icon>
        <Icon label="Zoom region">
          <path d="M2 15V2h20v15h-7" stroke={L} strokeWidth="2" strokeDasharray="4 2" />
          <circle cx="9" cy="14" r="4" stroke={T} strokeWidth="2" />
          <path d="M6 17l-5 6" stroke={T} strokeWidth="2" />
        </Icon>
        <Icon label="Pan" fly><path d="M6 23L1 13l2-1 3 3V5h2v6h1V2h2v9h1V1h2v10h1V4h2v11l4-5 2 1-5 12z" fill={L} /></Icon>
        <Icon label="Orbit" fly>
          <circle cx="12" cy="12" r="8" fill={L} />
          <path d="M4 12c0-10 8-8 8-8v8z" fill={T} />
          <path d="M3 21C-2 17 14-2 21 2s-8 24-18 19z" stroke="#444" strokeWidth="4" />
          <path d="M3 21C-2 17 14-2 21 2s-8 24-18 19z" stroke={L} strokeWidth="2" />
        </Icon>
        <Icon label="Maximise viewport">
          <path d="M1 1h22v22H1z" fill={L} />
          <path d="M4 13h7v7H4z" fill="#444" />
          <path d="M12 12l8-8M14 4h6v6" stroke="#333" strokeWidth="2" />
        </Icon>
      </div>
    </footer>
  );
}

export default function App() {
  return (
    <div className="flex h-screen flex-col overflow-hidden bg-[#444] font-['Noto_Sans',sans-serif] text-[15px]">
      <MenuBar />
      <Toolbar />
      <Ribbon />
      <main className="flex min-h-0 flex-1">
        <SideStrip />
        <SelectPanel />
        <div className="mt-2 flex min-w-0 flex-1 gap-1 pl-0.5">
          <LeftView />
          <RightView />
        </div>
        <CommandPanel />
      </main>
      <TimeArea />
      <StatusBar />
    </div>
  );
}
